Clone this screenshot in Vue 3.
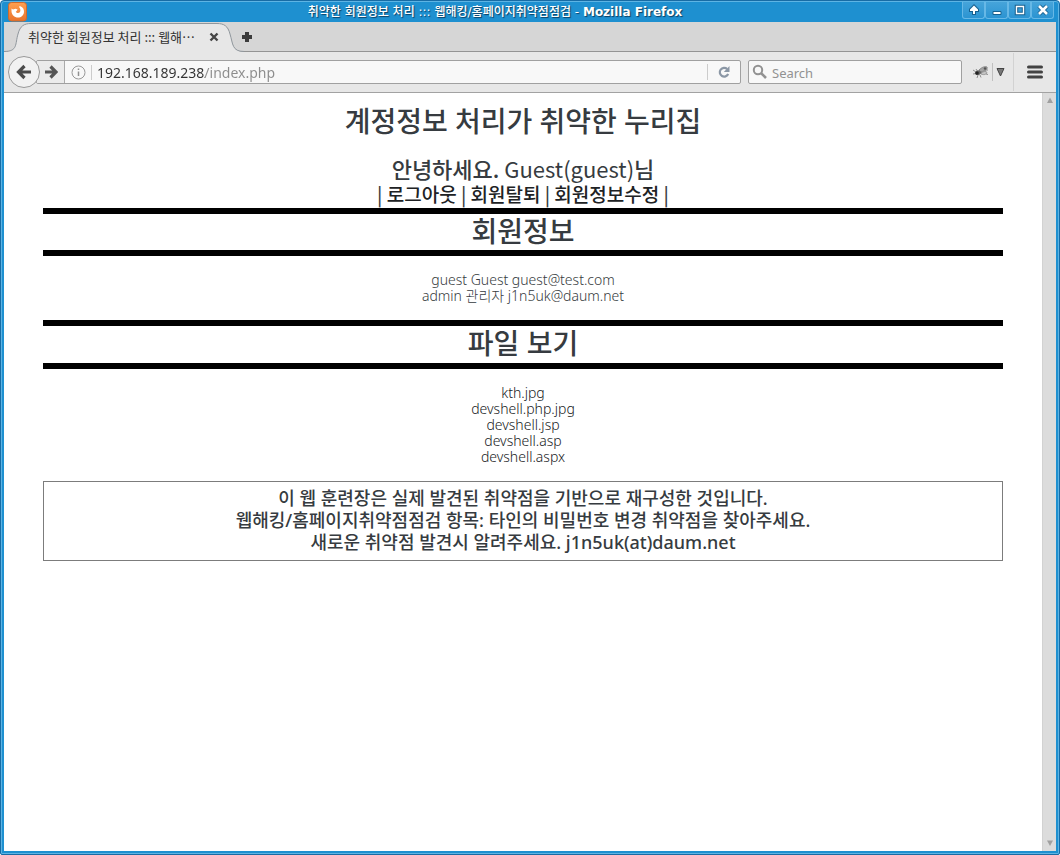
<script setup>
import { ref } from 'vue'

const address = ref('192.168.189.238/index.php')
const query = ref('')
const members = ['guest Guest guest@test.com', 'admin 관리자 j1n5uk@daum.net']
const files = ['kth.jpg', 'devshell.php.jpg', 'devshell.jsp', 'devshell.asp', 'devshell.aspx']
const notices = [
  '이 웹 훈련장은 실제 발견된 취약점을 기반으로 재구성한 것입니다.',
  '웹해킹/홈페이지취약점점검 항목: 타인의 비밀번호 변경 취약점을 찾아주세요.',
  '새로운 취약점 발견시 알려주세요. j1n5uk(at)daum.net'
]
</script>

<template>
  <div class="window">
    <header class="titlebar">
      <svg class="app-icon" width="20" height="20" viewBox="0 0 20 20" aria-hidden="true">
        <defs>
          <linearGradient id="orange" x1="0" y1="0" x2="0" y2="1">
            <stop offset="0" stop-color="#ffa050" />
            <stop offset="1" stop-color="#e9732c" />
          </linearGradient>
        </defs>
        <rect x="0.5" y="0.5" width="18" height="18.5" rx="3" fill="url(#orange)" stroke="#cf6b2c" />
        <path d="M3.5 6.5 L5 7.6 L7.5 6.8 L9.6 7.4 L8.6 9 L7.8 9.8 C8.6 11.4 11 11.4 12 10 C12.8 8.4 12.4 6.6 11.2 5.2 C10.8 4.6 11.4 4 12.4 4.2 C15 5 16.2 7.400 16 10 C15.700 13.400 13.200 15.600 10 15.600 C6.400 15.600 3.800 13 3.500 9.600 Z" fill="#fff" />
      </svg>
      <div class="caption">
        <span>취약한 회원정보 처리 ::: 웹해킹/홈페이지취약점점검 - </span><span class="product">Mozilla Firefox</span>
      </div>
      <div class="window-buttons">
        <button type="button" aria-label="Shade">
          <svg width="14" height="14" viewBox="0 0 14 14"><path d="M7 2.5 L3 6.5 V8 H6 V11 H8 V8 H11 V6.5 Z" fill="#fff" stroke="#17608f" stroke-width="2" paint-order="stroke" /></svg>
        </button>
        <button type="button" aria-label="Minimize">
          <svg width="14" height="14" viewBox="0 0 14 14"><path d="M3 8.5 H11 V11.5 H3 Z" fill="#fff" stroke="#17608f" /></svg>
        </button>
        <button type="button" aria-label="Maximize">
          <svg width="14" height="14" viewBox="0 0 14 14"><path d="M3.5 3.5 H10.5 V10.5 H3.5 Z" fill="none" stroke="#17608f" stroke-width="3.5" /><path d="M3.5 3.5 H10.5 V10.5 H3.5 Z" fill="none" stroke="#fff" stroke-width="1.4" /></svg>
        </button>
        <button type="button" aria-label="Close">
          <svg width="14" height="14" viewBox="0 0 14 14"><path d="M3 3 L11 11 M11 3 L3 11" stroke="#17608f" stroke-width="4.5" /><path d="M3 3 L11 11 M11 3 L3 11" stroke="#fff" stroke-width="2.6" /></svg>
        </button>
      </div>
    </header>

    <div class="tabstrip">
      <div class="tab">
        <svg class="tab-shape" width="240" height="30" viewBox="0 0 240 30" aria-hidden="true">
          <path d="M0 29.5 C14 29.5 11 22 14 12 C16 4 20 1.5 27 1.5 H213 C220 1.5 224 4 226 12 C229 22 228 29.5 240 29.5 V30 H0 Z" fill="#e7e7e7" />
          <path d="M0 29.5 C14 29.5 11 22 14 12 C16 4 20 1.5 27 1.5 H213 C220 1.5 224 4 226 12 C229 22 228 29.5 240 29.5" fill="none" stroke="#8f969c" />
        </svg>
        <span class="tab-title">취약한 회원정보 처리 ::: 웹해⋯</span>
        <button class="plain" type="button" aria-label="Close tab">
          <svg width="10" height="10" viewBox="0 0 10 10"><path d="M1.5 1.5 L8.5 8.5 M8.5 1.5 L1.5 8.5" stroke="#454545" stroke-width="2.4" /></svg>
        </button>
      </div>
      <button class="plain new-tab" type="button" aria-label="New tab">
        <svg width="12" height="12" viewBox="0 0 12 12"><path d="M4 1 H8 V4 H11 V8 H8 V11 H4 V8 H1 V4 H4 Z" fill="#3c3c3c" /></svg>
      </button>
    </div>

    <div class="toolbar">
      <button class="back" type="button" aria-label="Back">
        <svg width="18" height="18" viewBox="0 0 18 18"><path d="M9.5 3 L3.5 9 L9.5 15 M4 9 H16" fill="none" stroke="#4c4c4c" stroke-width="3.2" /></svg>
      </button>
      <div class="address">
        <button class="plain forward" type="button" aria-label="Forward">
          <svg width="14" height="14" viewBox="0 0 14 14"><path d="M6.5 1.5 L12 7 L6.5 12.500 M1 7 H11" fill="none" stroke="#555" stroke-width="3.2" /></svg>
        </button>
        <button class="plain info" type="button" aria-label="Site information">
          <svg width="15" height="15" viewBox="0 0 15 15"><circle cx="7.5" cy="7.5" r="6.5" fill="none" stroke="#999" /><path d="M7.5 6.5 V11 M7.5 3.5 V5" stroke="#909090" stroke-width="1.5" /></svg>
        </button>
        <input v-model="address" class="url" type="text" aria-label="Address" />
        <button class="plain reload" type="button" aria-label="Reload">
          <svg width="14" height="14" viewBox="0 0 14 14"><path d="M10.2 4 A4.4 4.4 0 1 0 11.2 9" fill="none" stroke="#8b97a5" stroke-width="2.2" /><path d="M12.5 1 V7 H6.8 Z" fill="#8b97a5" /></svg>
        </button>
      </div>
      <div class="search">
        <svg width="16" height="16" viewBox="0 0 16 16" aria-hidden="true"><circle cx="6" cy="6" r="4.2" fill="none" stroke="#929292" stroke-width="2" /><path d="M9 9 L14 14" stroke="#929292" stroke-width="2.6" /></svg>
        <input v-model="query" type="search" placeholder="Search" aria-label="Search" />
      </div>
      <button class="plain addon" type="button" aria-label="Add-on">
        <svg width="18" height="14" viewBox="0 0 18 14">
          <path d="M3 8 L5 5.500 L9 5 L10 8 L7 10 L4 10 Z" fill="#666" />
          <path d="M7 5 C10 2 13 1 15 2 C16 4 13 6 9 7 Z" fill="#a4a4a4" stroke="#777" stroke-width="0.8" />
          <path d="M9 8 C12 6 14 6 15 7.500 C14 10 11 10 9 9 Z" fill="#c4c4c4" stroke="#888" stroke-width="0.8" />
          <path d="M1 5 L4 7 M1 9 L4 8.500 M4 4 L6 7 M6 10 L5 13 M8 10 L9 12.500 M14 9 L16 9.500 M13 5 L16 5" stroke="#777" stroke-width="0.8" />
          <circle cx="5" cy="8" r="1.8" fill="#222" /><circle cx="13" cy="3.500" r="1.200" fill="#555" />
        </svg>
      </button>
      <button class="plain addon-menu" type="button" aria-label="Add-on menu">
        <svg width="9" height="9" viewBox="0 0 9 9"><path d="M1 0.500 H8 L4.500 8 Z" fill="#777" stroke="#444" /></svg>
      </button>
      <button class="plain menu" type="button" aria-label="Open menu">
        <svg width="16" height="14" viewBox="0 0 16 14"><path d="M1.500 2 H14.500 M1.500 7 H14.500 M1.500 12 H14.500" stroke="#424242" stroke-width="3" stroke-linecap="round" /></svg>
      </button>
    </div>

    <div class="viewport">
      <main class="page">
        <h1>계정정보 처리가 취약한 누리집</h1>
        <p class="greeting">안녕하세요. <span>Guest(guest)</span>님</p>
        <nav>
          | <a href="#logout">로그아웃</a> | <a href="#leave">회원탈퇴</a> | <a href="#edit">회원정보수정</a> |
        </nav>
        <section>
          <h2>회원정보</h2>
          <ul>
            <li v-for="member in members" :key="member">{{ member }}</li>
          </ul>
        </section>
        <section>
          <h2>파일 보기</h2>
          <ul>
            <li v-for="file in files" :key="file"><a :href="'#' + file">{{ file }}</a></li>
          </ul>
        </section>
        <div class="notice">
          <p v-for="notice in notices" :key="notice">{{ notice }}</p>
        </div>
      </main>
      <div class="scrollbar" aria-hidden="true">
        <svg width="8" height="7" viewBox="0 0 8 7"><path d="M4 0.500 L7 6 H1 Z" fill="#a0a0a0" /></svg>
        <svg width="8" height="7" viewBox="0 0 8 7"><path d="M4 6 L1 0.500 H7 Z" fill="#a0a0a0" /></svg>
      </div>
    </div>
  </div>
</template>

<style>
body {
  background: #fff;
}
</style>

<style scoped>
* {
  box-sizing: border-box;
}

.window {
  display: flex;
  flex-direction: column;
  min-height: 100vh;
  padding: 1px 3px 3px;
  border: 1px solid #186ca5;
  border-radius: 4px 4px 2px 2px;
  background: #1e90d0;
  box-shadow: inset 0 0 0 1px #5db4e4;
  font-family: "Noto Sans", "Noto Sans CJK KR", sans-serif;
}

button {
  display: flex;
  align-items: center;
  justify-content: center;
  margin: 0;
  padding: 0;
  font: inherit;
}

.plain {
  border: 0;
  background: none;
}

.titlebar {
  display: flex;
  align-items: flex-start;
  height: 20px;
  padding: 0 2px 0 4px;
}

.app-icon {
  flex: none;
}

.caption {
  flex: 1;
  color: #fff;
  font-family: "DejaVu Sans", "Noto Sans CJK KR", sans-serif;
  font-size: 12px;
  font-weight: 500;
  line-height: 20px;
  text-align: center;
  text-shadow: 1px 1px 1px #0c3e60;
  white-space: nowrap;
}

.caption .product {
  font-weight: 700;
}

.window-buttons {
  display: flex;
}

.window-buttons button {
  width: 23px;
  height: 17px;
  border: 1px solid #67b8e6;
  border-top: 0;
  border-radius: 0 0 3px 3px;
  background: linear-gradient(#46a4da, #2b94d2);
}

.tabstrip {
  display: flex;
  align-items: center;
  height: 30px;
  border-bottom: 1px solid #949494;
  background: #d6d6d6;
}

.tab {
  position: relative;
  display: flex;
  align-items: center;
  justify-content: space-between;
  width: 240px;
  height: 30px;
  padding: 0 25px 0 24px;
  color: #333;
  font-family: "Noto Sans CJK KR", sans-serif;
  font-size: 13px;
}

.tab-shape {
  position: absolute;
  left: 0;
  top: 0;
}

.tab-title,
.tab button {
  position: relative;
  white-space: nowrap;
}

.new-tab {
  margin-left: -3px;
}

.toolbar {
  display: flex;
  align-items: center;
  height: 41px;
  padding-left: 4px;
  border-bottom: 1px solid #a2a2a2;
  background: #e7e7e7;
}

.back {
  position: relative;
  flex: none;
  width: 32px;
  height: 32px;
  border: 1px solid #999;
  border-radius: 50%;
  background: #f2f2f2;
}

.address {
  display: flex;
  flex: 1;
  align-items: center;
  height: 24px;
  margin-left: -4px;
  border: 1px solid #a0a0a0;
  border-radius: 2px;
  background: #f8f8f8;
}

.forward {
  width: 28px;
  height: 22px;
  border-right: 1px solid #aaa;
  background: #ebebeb;
}

.info {
  width: 27px;
  height: 15px;
  border-right: 1px solid #ccc;
}

input {
  min-width: 0;
  margin: 0;
  padding: 2px 0 0;
  border: 0;
  background: none;
  outline: 0;
  font-family: "Noto Sans", sans-serif;
  font-size: 13px;
  line-height: 20px;
}

.url {
  flex: 1;
  margin-left: 5px;
  background: linear-gradient(90deg, #333 108px, #8c8c8c 108px);
  background-clip: text;
  -webkit-background-clip: text;
  color: transparent;
  font-size: 14px;
}

.reload {
  width: 33px;
  height: 16px;
  border-left: 1px solid #ccc;
}

.search {
  display: flex;
  align-items: center;
  width: 214px;
  height: 24px;
  margin-left: 7px;
  padding-left: 3px;
  border: 1px solid #a0a0a0;
  border-radius: 2px;
  background: #f8f8f8;
}

.search input {
  flex: 1;
  margin-left: 4px;
  appearance: none;
}

.search input::placeholder {
  color: #929292;
}

.addon {
  width: 31px;
  height: 18px;
  padding-left: 7px;
  border-right: 1px solid #c0c0c0;
}

.addon-menu {
  width: 14px;
  height: 18px;
}

.menu {
  width: 43px;
  height: 38px;
  margin-left: 6px;
  border-left: 1px solid #d2d2d2;
}

.viewport {
  display: flex;
  flex: 1;
  background: #fff;
}

.page {
  flex: 1;
  padding: 12px 39px 20px;
  color: #363b40;
  font-size: 14px;
  line-height: 16px;
  text-align: center;
}

h1,
h2,
p,
ul {
  margin: 0;
  padding: 0;
  font-weight: 500;
}

h1 {
  font-size: 28px;
  line-height: 32px;
}

.greeting {
  margin: 20px 0 2px;
  font-family: "Noto Sans CJK KR", sans-serif;
  font-size: 22px;
  line-height: 22px;
}

.greeting span {
  font-weight: 400;
}

nav {
  padding-bottom: 2px;
  font-family: "Noto Sans CJK KR", sans-serif;
  font-size: 19px;
  font-weight: 500;
  line-height: 25px;
}

a {
  color: #202224;
  text-decoration: none;
}

h2 {
  padding-bottom: 2px;
  border: solid #000;
  border-width: 6px 0;
  font-size: 28px;
  line-height: 34px;
}

section + section h2 {
  padding-bottom: 3px;
}

ul {
  margin: 16px 0;
  font-weight: 300;
  list-style: none;
}

.notice {
  padding: 5px 8px 7px;
  border: 1px solid #7c7c7c;
  font-size: 18px;
  line-height: 22px;
}

.scrollbar {
  display: flex;
  flex-direction: column;
  align-items: center;
  justify-content: space-between;
  width: 14px;
  padding: 4px 0;
  border-left: 1px solid #d2d2d2;
  background: #dcdcdc;
}
</style>
